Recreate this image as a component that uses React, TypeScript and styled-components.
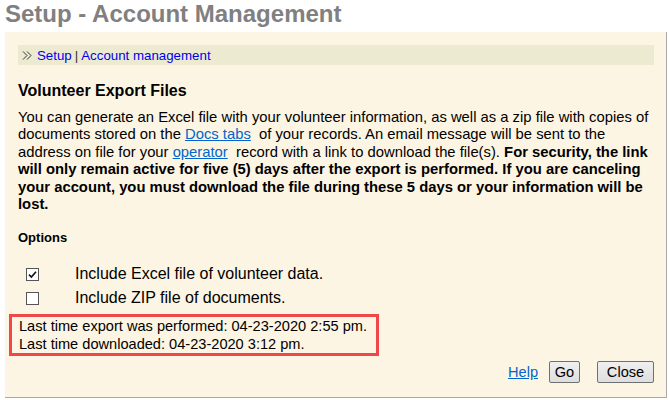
import React from "react"
import styled, { createGlobalStyle } from "styled-components"

const GlobalStyle = createGlobalStyle`
  html, body {
    margin: 0;
    padding: 0;
    background: #ffffff;
  }
  body {
    font-family: "Liberation Sans", Arial, sans-serif;
    color: #000000;
  }
`

const Page = styled.div`
  width: 669px;
  height: 400px;
  overflow: hidden;
  padding-left: 5px;
  box-sizing: border-box;
`

const Title = styled.h1`
  margin: 0 0 5px 0;
  font-size: 24px;
  line-height: 27px;
  font-weight: bold;
  color: #808080;
`

const Panel = styled.div`
  width: 662px;
  box-sizing: border-box;
  background: #fdf5e4;
  border-right: 1px solid #a9a9a9;
  border-bottom: 1px solid #a9a9a9;
  padding: 13px 12px 14px 13px;
`

const Crumbs = styled.div`
  height: 20px;
  background: #ecebd1;
  display: flex;
  align-items: center;
  padding-left: 4px;
  font-size: 13.3px;
  color: #333333;
  gap: 3px;

  a {
    color: #0000ee;
    text-decoration: none;
  }
`

const Chevrons = styled.svg`
  margin-right: 2px;
  flex: none;
`

const Heading = styled.h2`
  margin: 17px 0 9px 0;
  font-size: 16px;
  line-height: 18px;
  font-weight: bold;
`

const Para = styled.p`
  margin: 0;
  font-size: 14.8px;
  line-height: 17.4px;

  a {
    color: #0066cc;
    text-decoration: underline;
  }
`

const OptionsLabel = styled.div`
  margin-top: 17px;
  font-size: 13px;
  line-height: 15px;
  font-weight: bold;
`

const OptionList = styled.div`
  margin-top: 20px;
  display: flex;
  flex-direction: column;
  gap: 11px;
  padding-left: 8px;
`

const OptionRow = styled.label`
  display: grid;
  grid-template-columns: 13px 1fr;
  column-gap: 36px;
  align-items: center;
  height: 13px;
  font-size: 16px;
`

const Box = styled.span`
  width: 11px;
  height: 11px;
  border: 1px solid #555555;
  background: #ffffff;
  display: flex;
  align-items: center;
  justify-content: center;
`

const Status = styled.div`
  margin: 12px 0 0 -9px;
  width: 370px;
  box-sizing: border-box;
  border: 3px solid #f04848;
  padding: 0 4px 0 7px;
  font-size: 14.6px;
  line-height: 18px;
  white-space: nowrap;
`

const Footer = styled.div`
  margin-top: 5px;
  display: flex;
  justify-content: flex-end;
  align-items: center;
  gap: 11px;
`

const HelpLink = styled.a`
  color: #0066cc;
  text-decoration: underline;
  font-size: 14.6px;
`

const Buttons = styled.div`
  display: flex;
  gap: 17px;
`

const Button = styled.button<{ $w: number }>`
  width: ${({ $w }) => $w}px;
  height: 22px;
  padding: 0;
  font-family: "Liberation Sans", Arial, sans-serif;
  font-size: 14.6px;
  color: #000000;
  background: linear-gradient(#f0f0f0, #dedede);
  border: 1px solid #707070;
  border-radius: 2px;
`

function Checkbox({ checked }: { checked?: boolean }) {
  return (
    <Box>
      {checked && (
        <svg width="9" height="9" viewBox="0 0 9 9">
          <path d="M1 4.6 L3.4 7 L8 1.8" fill="none" stroke="#111" strokeWidth="1.6" />
        </svg>
      )}
    </Box>
  )
}

export default function App() {
  return (
    <Page>
      <GlobalStyle />
      <Title>Setup - Account Management</Title>
      <Panel>
        <Crumbs>
          <Chevrons width="10" height="9" viewBox="0 0 10 9">
            <path d="M1 0.5 L5 4.5 L1 8.5 M5 0.5 L9 4.5 L5 8.5" fill="none" stroke="#333" strokeWidth="1" />
          </Chevrons>
          <a href="#">Setup</a>
          <span>|</span>
          <a href="#">Account management</a>
        </Crumbs>
        <Heading>Volunteer Export Files</Heading>
        <Para>
          You can generate an Excel file with your volunteer information, as well as a zip file
          with copies of documents stored on the <a href="#">Docs tabs</a>&nbsp; of your records. An
          email message will be sent to the address on file for your <a href="#">operator</a>&nbsp;
          record with a link to download the file(s).{" "}
          <b>
            For security, the link will only remain active for five (5) days after the export is
            performed. If you are canceling your account, you must download the file during these 5
            days or your information will be lost.
          </b>
        </Para>
        <OptionsLabel>Options</OptionsLabel>
        <OptionList>
          <OptionRow>
            <Checkbox checked />
            <span>Include Excel file of volunteer data.</span>
          </OptionRow>
          <OptionRow>
            <Checkbox />
            <span>Include ZIP file of documents.</span>
          </OptionRow>
        </OptionList>
        <Status>
          Last time export was performed: 04-23-2020 2:55 pm.
          <br />
          Last time downloaded: 04-23-2020 3:12 pm.
        </Status>
        <Footer>
          <HelpLink href="#">Help</HelpLink>
          <Buttons>
            <Button $w={31}>Go</Button>
            <Button $w={57}>Close</Button>
          </Buttons>
        </Footer>
      </Panel>
    </Page>
  )
}
